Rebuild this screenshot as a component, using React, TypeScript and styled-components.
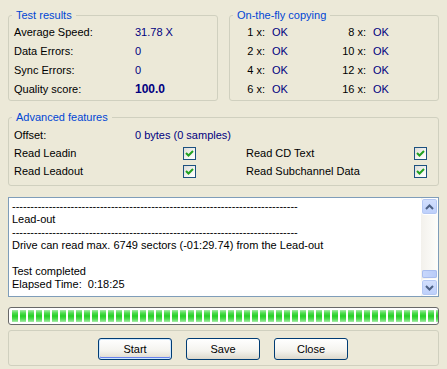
import styled, { createGlobalStyle } from "styled-components";

const GlobalStyle = createGlobalStyle`
  html, body {
    margin: 0;
    padding: 0;
    background: #ece9d8;
  }
  body {
    font-family: "Liberation Sans", Tahoma, Arial, sans-serif;
    font-size: 11px;
    color: #000;
  }
`;

const Window = styled.div`
  width: 447px;
  height: 369px;
  box-sizing: border-box;
  padding: 8px 8px 0;
  background: #ece9d8;
  display: flex;
  flex-direction: column;
  overflow: hidden;
`;

const TopRow = styled.div`
  display: flex;
  gap: 11px;
`;

const Group = styled.fieldset<{ $mt?: number; $pb?: number }>`
  margin: ${({ $mt }) => $mt ?? 0}px 0 0;
  padding: 0 5px ${({ $pb }) => $pb ?? 2}px;
  min-inline-size: 0;
  border: 1px solid #d0d0bf;
  border-radius: 3px;
  flex: 0 0 auto;
`;

const HalfGroup = styled(Group)`
  flex: 1;
`;

const Legend = styled.legend`
  color: #0046d5;
  padding: 0 4px;
  margin-left: -2px;
  line-height: 14px;
`;

const StatRow = styled.div`
  display: grid;
  grid-template-columns: 121px 1fr;
  height: 19px;
  align-items: center;
`;

const Value = styled.span<{ $bold?: boolean }>`
  color: #000080;
  font-weight: ${({ $bold }) => ($bold ? 700 : 400)};
  font-size: ${({ $bold }) => ($bold ? "12px" : "11px")};
`;

const SpeedGrid = styled.div`
  display: grid;
  grid-template-columns: 30px 60px 41px 1fr;
  grid-auto-rows: 19px;
  align-items: center;
`;

const SpeedLabel = styled.span`
  text-align: right;
`;

const SpeedOk = styled.span`
  color: #000080;
  padding-left: 7px;
`;

const OptionGrid = styled.div`
  display: grid;
  grid-template-columns: 169px 13px 50px 168px 13px;
  grid-auto-rows: 18px;
  align-items: center;
  padding-top: 2px;
`;

const OffsetRow = styled.div`
  grid-column: 1 / -1;
  display: grid;
  grid-template-columns: 121px 1fr;
  height: 19px;
  align-items: center;
`;

const CheckBox = styled.span`
  width: 11px;
  height: 11px;
  border: 1px solid #1c5180;
  background: linear-gradient(135deg, #dcdcd7 0%, #f5f5f2 60%, #ffffff 100%);
  display: flex;
  align-items: center;
  justify-content: center;
`;

const LogBox = styled.div`
  margin-top: 11px;
  height: 100px;
  flex: 0 0 auto;
  box-sizing: border-box;
  border: 1px solid #7f9db9;
  background: #fff;
  display: flex;
`;

const LogText = styled.div`
  flex: 1;
  padding: 2px 3px 0;
  line-height: 13px;
  white-space: pre;
  overflow: hidden;
`;

const Scrollbar = styled.div`
  width: 17px;
  display: flex;
  flex-direction: column;
  background: linear-gradient(90deg, #f3f1ec 0%, #fefefb 100%);
`;

const ScrollButton = styled.div`
  height: 17px;
  box-sizing: border-box;
  border: 1px solid #fff;
  border-radius: 3px;
  background: linear-gradient(180deg, #d4e0fd 0%, #bccffb 100%);
  box-shadow: inset 0 0 0 1px #b5c8f3;
  display: flex;
  align-items: center;
  justify-content: center;
`;

const ScrollTrack = styled.div`
  flex: 1;
  display: flex;
  flex-direction: column;
  justify-content: flex-end;
`;

const ScrollThumb = styled.div`
  height: 8px;
  margin: 0 1px 1px;
  border-radius: 2px;
  background: linear-gradient(90deg, #c9d8fc 0%, #b8cbf8 100%);
  box-shadow: inset 0 0 0 1px #a9bdee;
`;

const Progress = styled.div`
  margin-top: 10px;
  height: 18px;
  flex: 0 0 auto;
  box-sizing: border-box;
  border: 1px solid #686868;
  border-radius: 3px;
  background: #fff;
  padding: 2px 2px 2px 3px;
  display: flex;
  gap: 2px;
  overflow: hidden;
`;

const Block = styled.span`
  flex: 0 0 6px;
  height: 12px;
  background: linear-gradient(
    180deg,
    #a8ecaa 0%,
    #4fdc50 25%,
    #25cf26 50%,
    #4fdc50 75%,
    #a8ecaa 100%
  );
`;

const ButtonGroup = styled.div`
  margin-top: 5px;
  height: 36px;
  flex: 0 0 auto;
  box-sizing: border-box;
  border: 1px solid #d0d0bf;
  border-radius: 3px;
  display: flex;
  justify-content: center;
  gap: 15px;
  padding: 7px 0 0 0;
`;

const Button = styled.button<{ $focused?: boolean }>`
  width: 74px;
  height: 22px;
  margin-left: -1px;
  font-family: inherit;
  font-size: 11px;
  color: #000;
  border: 1px solid #003c74;
  border-radius: 3px;
  background: linear-gradient(180deg, #ffffff 0%, #f4f3ee 60%, #dcd8cc 100%);
  box-shadow: ${({ $focused }) =>
    $focused ? "inset 0 0 0 1px #cee7ff, inset 0 -1px 0 1px #6982ee" : "none"};
  padding: 0;
`;

const Chevron = ({ up }: { up?: boolean }) => (
  <svg width="9" height="6" viewBox="0 0 9 6">
    <path
      d={up ? "M1 5 L4.5 1.5 L8 5" : "M1 1 L4.5 4.5 L8 1"}
      fill="none"
      stroke="#4d6185"
      strokeWidth="2"
    />
  </svg>
);

const Check = () => (
  <CheckBox>
    <svg width="9" height="9" viewBox="0 0 9 9">
      <path d="M1 4 L3.5 6.5 L8 2" fill="none" stroke="#21a121" strokeWidth="2" />
    </svg>
  </CheckBox>
);

const speeds = [
  ["1 x:", "8 x:"],
  ["2 x:", "10 x:"],
  ["4 x:", "12 x:"],
  ["6 x:", "16 x:"],
];

const dashes = "-".repeat(78);

const logLines = [
  dashes,
  "Lead-out",
  dashes,
  "Drive can read max. 6749 sectors (-01:29.74) from the Lead-out",
  "",
  "Test completed",
  "Elapsed Time:  0:18:25",
];

const App = () => {
  return (
    <>
      <GlobalStyle />
      <Window>
        <TopRow>
          <HalfGroup>
            <Legend>Test results</Legend>
            <StatRow>
              <span>Average Speed:</span>
              <Value>31.78 X</Value>
            </StatRow>
            <StatRow>
              <span>Data Errors:</span>
              <Value>0</Value>
            </StatRow>
            <StatRow>
              <span>Sync Errors:</span>
              <Value>0</Value>
            </StatRow>
            <StatRow>
              <span>Quality score:</span>
              <Value $bold>100.0</Value>
            </StatRow>
          </HalfGroup>
          <HalfGroup>
            <Legend>On-the-fly copying</Legend>
            <SpeedGrid>
              {speeds.map(([a, b]) => (
                <>
                  <SpeedLabel key={a}>{a}</SpeedLabel>
                  <SpeedOk>OK</SpeedOk>
                  <SpeedLabel>{b}</SpeedLabel>
                  <SpeedOk>OK</SpeedOk>
                </>
              ))}
            </SpeedGrid>
          </HalfGroup>
        </TopRow>

        <Group $mt={9} $pb={5}>
          <Legend>Advanced features</Legend>
          <OptionGrid>
            <OffsetRow>
              <span>Offset:</span>
              <Value>0 bytes (0 samples)</Value>
            </OffsetRow>
            <span>Read Leadin</span>
            <Check />
            <span />
            <span>Read CD Text</span>
            <Check />
            <span>Read Leadout</span>
            <Check />
            <span />
            <span>Read Subchannel Data</span>
            <Check />
          </OptionGrid>
        </Group>

        <LogBox>
          <LogText>
            {logLines.map((l, i) => (
              <div key={i}>{l || " "}</div>
            ))}
          </LogText>
          <Scrollbar>
            <ScrollButton>
              <Chevron up />
            </ScrollButton>
            <ScrollTrack>
              <ScrollThumb />
            </ScrollTrack>
            <ScrollButton>
              <Chevron />
            </ScrollButton>
          </Scrollbar>
        </LogBox>

        <Progress>
          {Array.from({ length: 54 }).map((_, i) => (
            <Block key={i} />
          ))}
        </Progress>

        <ButtonGroup>
          <Button $focused>Start</Button>
          <Button>Save</Button>
          <Button>Close</Button>
        </ButtonGroup>
      </Window>
    </>
  );
};

export default App;
